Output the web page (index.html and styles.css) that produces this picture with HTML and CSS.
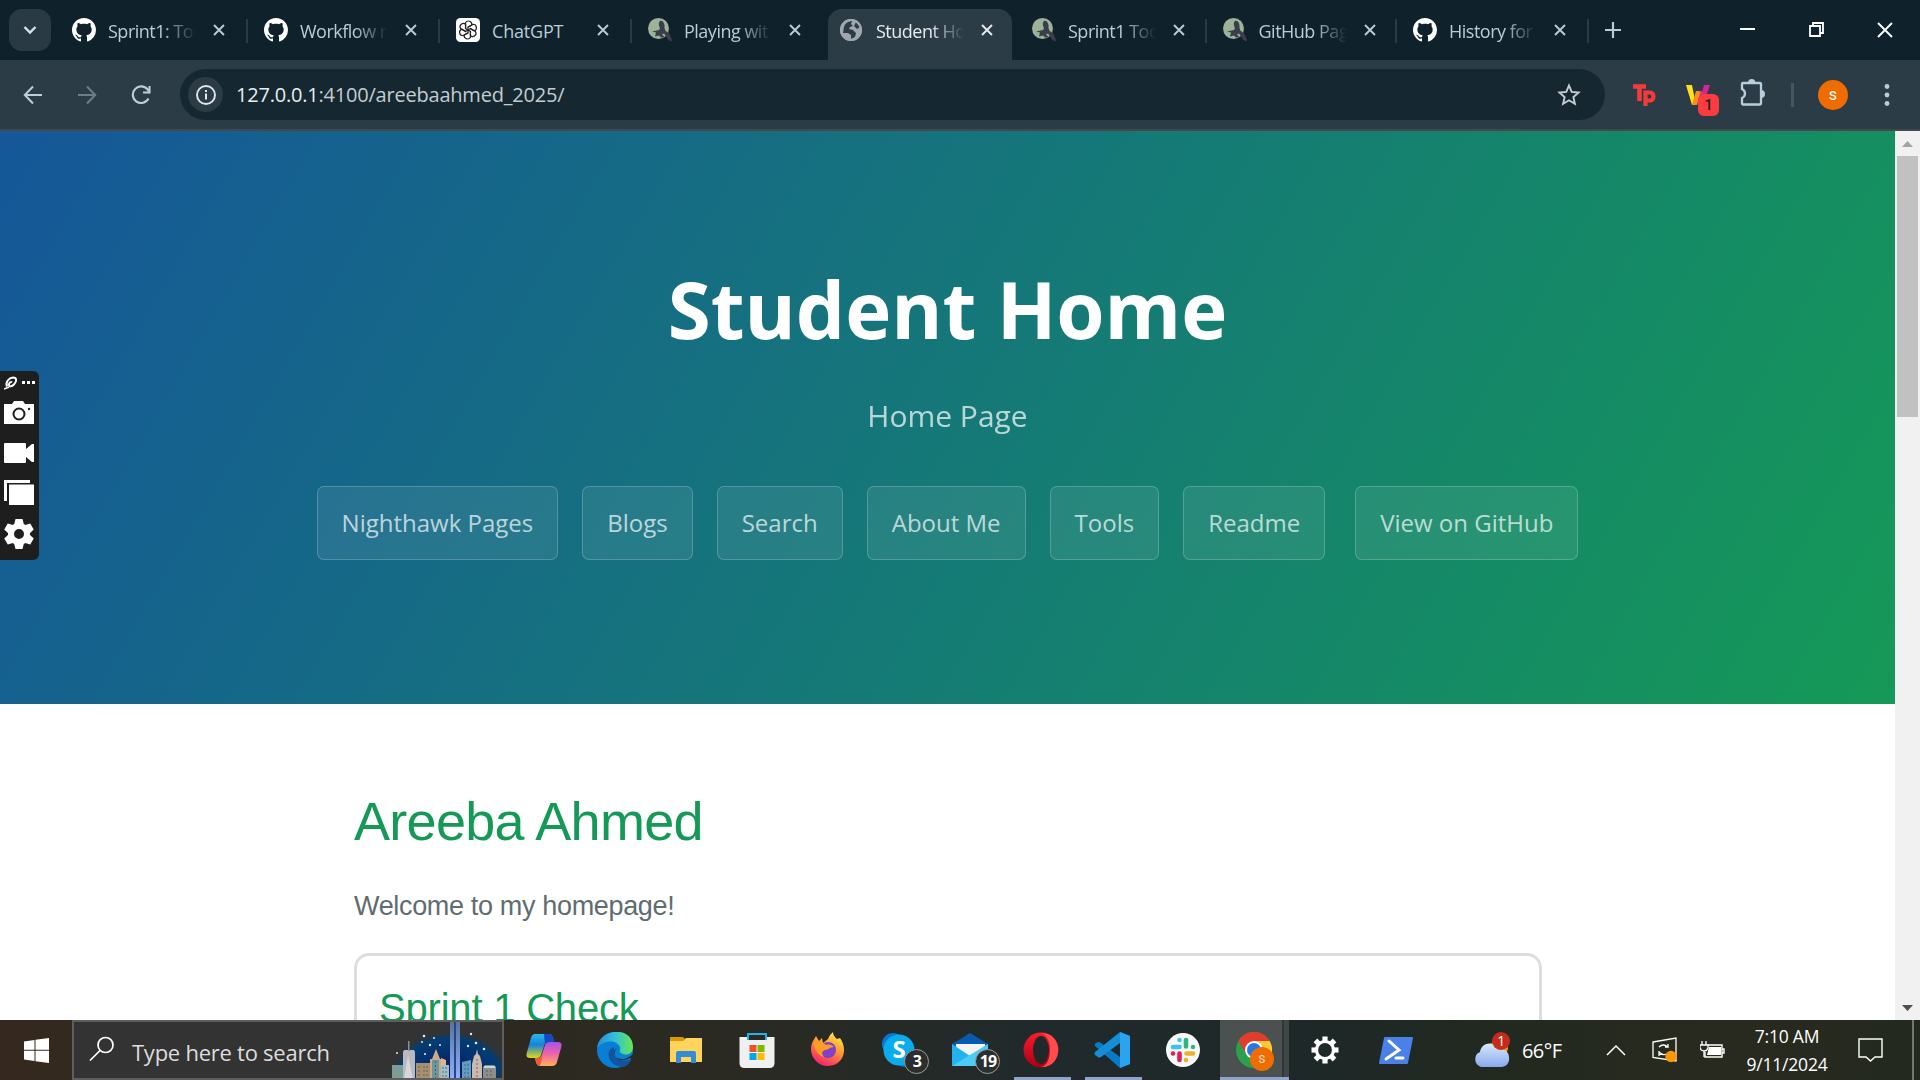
FILE: index.html
```html
<!DOCTYPE html>
<html lang="en">
<head>
<meta charset="utf-8">
<title>Student Home</title>
<link rel="stylesheet" href="styles.css">
</head>
<body>
<svg width="0" height="0" class="defs">
  <defs>
    <symbol id="github" viewBox="0 0 16 16"><path fill="#fff" fill-rule="evenodd" d="M8 0C3.58 0 0 3.58 0 8c0 3.54 2.29 6.53 5.47 7.59.4.07.55-.17.55-.38 0-.19-.01-.82-.01-1.49-2.01.37-2.53-.49-2.69-.94-.09-.23-.48-.94-.82-1.13-.28-.15-.68-.52-.01-.53.63-.01 1.08.58 1.23.82.72 1.21 1.87.87 2.33.66.07-.52.28-.87.51-1.07-1.78-.2-3.64-.89-3.64-3.95 0-.87.31-1.59.82-2.15-.08-.2-.36-1.02.08-2.12 0 0 .67-.21 2.2.82.64-.18 1.32-.27 2-.27s1.36.09 2 .27c1.53-1.04 2.2-.82 2.2-.82.44 1.1.16 1.92.08 2.12.51.56.82 1.27.82 2.15 0 3.07-1.87 3.75-3.65 3.95.29.25.54.73.54 1.48 0 1.07-.01 1.93-.01 2.2 0 .21.15.46.55.38A8.01 8.01 0 0 0 16 8c0-4.42-3.58-8-8-8z"/></symbol>
    <symbol id="hawk" viewBox="0 0 24 24"><circle cx="10.5" cy="10.5" r="10.5" fill="#9db296"/><path fill="#3a3d4c" d="M12 3c3-1 5 3 4.500 7l1 3c3 1 5 4 6.500 9.500l-1 1-3-2-4-6-2 1 3 3h-4l-2-2-4 1 1-4-4-1 7-1.500 1-2c-1-2-2-5 0-7z"/></symbol>
    <symbol id="x" viewBox="0 0 12 12"><path d="M1 1l10 10M11 1L1 11" fill="none" stroke="currentColor" stroke-width="1.900"/></symbol>
    <symbol id="knot" viewBox="0 0 24 24"><rect width="24" height="24" rx="4.500" fill="#fff"/><g fill="none" stroke="#222" stroke-width="1.200"><path id="petal" d="M12 9.300l3.800-2.200a3.400 3.400 0 0 0-6.300-2.300v5.800l2.500 1.500"/><use href="#petal" transform="rotate(60 12 12)"/><use href="#petal" transform="rotate(120 12 12)"/><use href="#petal" transform="rotate(180 12 12)"/><use href="#petal" transform="rotate(240 12 12)"/><use href="#petal" transform="rotate(300 12 12)"/></g></symbol>
  </defs>
</svg>
<div class="screen">
  <header class="tabs">
    <div class="tab-search"><svg width="14" height="10" viewBox="0 0 14 10"><path d="M1.500 2l5.500 5.500L12.500 2" fill="none" stroke="#d8e3e8" stroke-width="2.400"/></svg></div>
    <div class="tab"><svg class="fav"><use href="#github"/></svg><span class="label">Sprint1: Too</span><svg class="close"><use href="#x"/></svg></div>
    <div class="tab"><svg class="fav"><use href="#github"/></svg><span class="label">Workflow r</span><svg class="close"><use href="#x"/></svg></div>
    <div class="tab"><svg class="fav"><use href="#knot"/></svg><span class="label">ChatGPT</span><svg class="close"><use href="#x"/></svg></div>
    <div class="tab plain"><svg class="fav"><use href="#hawk"/></svg><span class="label">Playing wit</span><svg class="close"><use href="#x"/></svg></div>
    <div class="tab active"><svg class="fav" viewBox="0 0 24 24"><circle cx="11" cy="12" r="11" fill="#9fa8af"/><path d="M4 9c1-4 5-6 8-6l-1 3 2 2-3 1-1 2 4 1 3 3-1 4-4 2v-4l-3-2H3zM16 4l4 5-3 2-3-3z" fill="#2c3c46"/><circle cx="11" cy="12" r="10" fill="none" stroke="#9fa8af" stroke-width="2"/></svg><span class="label">Student Ho</span><svg class="close"><use href="#x"/></svg></div>
    <div class="tab"><svg class="fav"><use href="#hawk"/></svg><span class="label">Sprint1 Too</span><svg class="close"><use href="#x"/></svg></div>
    <div class="tab"><svg class="fav"><use href="#hawk"/></svg><span class="label">GitHub Pag</span><svg class="close"><use href="#x"/></svg></div>
    <div class="tab"><svg class="fav"><use href="#github"/></svg><span class="label">History for</span><svg class="close"><use href="#x"/></svg></div>
    <svg class="plus" width="16" height="16" viewBox="0 0 16 16"><path d="M8 0v16M0 8h16" stroke="#b9cdd7" stroke-width="2.200"/></svg>
    <div class="window">
      <svg width="16" height="16"><path d="M0 7h15" stroke="#fff" stroke-width="2"/></svg>
      <svg width="16" height="16"><path d="M1 4h10v10H1zM4 4V1h10v10h-3" fill="none" stroke="#fff" stroke-width="1.800"/></svg>
      <svg width="16" height="16"><path d="M1 1l14 14M15 1L1 15" stroke="#fff" stroke-width="1.900"/></svg>
    </div>
  </header>
  <div class="toolbar">
    <div class="nav">
      <svg width="20" height="20" viewBox="0 0 20 20"><path d="M19 10H2M10 1.500L1.800 10l8.200 8.500" fill="none" stroke="#b9d0dc" stroke-width="2"/></svg>
      <svg width="20" height="20" viewBox="0 0 20 20"><path d="M1 10h17M10 1.500l8.200 8.500-8.200 8.500" fill="none" stroke="#6e7d86" stroke-width="2"/></svg>
      <svg width="20" height="20" viewBox="0 0 20 20"><path d="M17.500 13.500A8.300 8.300 0 1 1 17 5l1 1.500M18.500 1v6.500H12" fill="none" stroke="#b9d0dc" stroke-width="2.100"/></svg>
    </div>
    <div class="omnibox">
      <span class="info"><svg width="22" height="22" viewBox="0 0 22 22"><circle cx="11" cy="11" r="9" fill="none" stroke="#e0e6ea" stroke-width="1.900"/><path d="M11 9.500v6M11 6v2" stroke="#e0e6ea" stroke-width="2"/></svg></span>
      <span class="url">127.0.0.1<i>:4100/areebaahmed_2025/</i></span>
      <svg class="star" width="24" height="24" viewBox="0 0 24 24"><path d="M12 2.500l2.700 6.400 6.900.6-5.200 4.600 1.500 6.800L12 17.300l-5.900 3.600 1.500-6.800-5.200-4.600 6.900-.6z" fill="none" stroke="#c6ced2" stroke-width="1.900"/></svg>
    </div>
    <div class="extensions">
      <svg width="24" height="24" viewBox="0 0 24 24"><path d="M0 3.500h13M6.500 3v15" stroke="#f33b3b" stroke-width="4.600"/><path d="M12.500 23V9.500h4.500a3.500 4 0 0 1 0 8h-4" fill="none" stroke="#f33b3b" stroke-width="4.200"/></svg>
      <span class="w-ext"><svg width="26" height="24" viewBox="0 0 26 24"><path d="M0 2h6l4 20H6z" fill="#ffe01b"/><path d="M6 22l4-14h5l-4 14z" fill="#ff8a1e"/><path d="M13 8l4 10 2-9z" fill="#e94a55"/><path d="M18 2h6l-5 14h-5z" fill="#d52593"/></svg><b>1</b></span>
      <svg class="puzzle" width="26" height="28" viewBox="0 0 26 28"><path d="M3 4h17a1 1 0 0 1 1 1v19.500a1 1 0 0 1-1 1H3a1 1 0 0 1-1-1V19c4-2 4-7 0-9V5a1 1 0 0 1 1-1z" fill="none" stroke="#b6cedb" stroke-width="2.300"/><path d="M8 4a3.700 4 0 0 1 7.400 0zM21 11a4 4 0 0 1 0 8z" fill="#b6cedb"/></svg>
      <span class="rule"></span><span class="avatar">s</span>
      <svg class="dots" width="6" height="24"><circle cx="3" cy="3.500" r="2.400" fill="#b6cedb"/><circle cx="3" cy="12" r="2.400" fill="#b6cedb"/><circle cx="3" cy="20.500" r="2.400" fill="#b6cedb"/></svg>
    </div>
  </div>
  <div class="viewport">
    <div class="page">
      <section class="hero">
        <h1>Student Home</h1>
        <h2>Home Page</h2>
        <nav><a>Nighthawk Pages</a><a>Blogs</a><a>Search</a><a>About Me</a><a>Tools</a><a>Readme</a><a class="repo">View on GitHub</a></nav>
      </section>
      <main>
        <h1>Areeba Ahmed</h1>
        <p>Welcome to my homepage!</p>
        <div class="card"><h2>Sprint 1 Check</h2></div>
      </main>
    </div>
    <div class="scroll"><svg width="25" height="25"><path d="M7 16l5.500-6 5.500 6z" fill="#a3a3a3"/></svg><span></span><svg width="25" height="25"><path d="M7 10l5.500 6 5.500-6z" fill="#505050"/></svg></div>
    <aside class="capture">
      <svg width="31" height="14" viewBox="0 0 31 14"><g fill="none" stroke="#fff"><path d="M3 10.500C1 6 5 2 9 1.500c4 0 4 4 1 7-2 2-5 3-5 0 0-2 2-3 3-2" stroke-width="2"/><path d="M0 13l5-2" stroke-width="1.500"/></g><path d="M18 5h3v3h-3zM23 5h3v3h-3zM28 5h3v3h-3z" fill="#fff"/></svg>
      <svg width="30" height="23" viewBox="0 0 30 23"><path d="M0 3h8l2-3h9l2 3h9v20H0z" fill="#fff"/><circle cx="15" cy="13" r="5.500" fill="#fff" stroke="#1e1e1e" stroke-width="2"/><circle cx="25" cy="8" r="1.200" fill="#222"/></svg>
      <svg width="30" height="20" viewBox="0 0 30 20"><path d="M1 0h20q1 0 1 1v5l6-5h2v18h-2l-6-5v5q0 1-1 1H1q-1 0-1-1V1q0-1 1-1z" fill="#fff"/></svg>
      <svg width="30" height="25" viewBox="0 0 30 25"><path d="M0 0h26v3H3v18H0zM5 4.500h25V25H5z" fill="#fff"/></svg>
      <svg width="30" height="30" viewBox="-15 -15 30 30"><g fill="#fff"><path id="tooth" d="M-3.500-15h7l1.500 6h-10z"/><use href="#tooth" transform="rotate(60)"/><use href="#tooth" transform="rotate(120)"/><use href="#tooth" transform="rotate(180)"/><use href="#tooth" transform="rotate(240)"/><use href="#tooth" transform="rotate(300)"/></g><circle r="8" fill="none" stroke="#fff" stroke-width="6"/></svg>
    </aside>
  </div>
  <footer class="taskbar">
    <div class="start"><svg width="25" height="25" viewBox="0 0 25 25"><path d="M0 3.500l10.500-1.500v9.700H0zM11.500 1.800L25 0v11.700H11.500zM0 12.800h10.500V23L0 21.500zM11.500 12.800H25V25l-13.500-1.800z" fill="#fff"/></svg></div>
    <div class="search">
      <svg width="26" height="26" viewBox="0 0 26 26"><circle cx="16.500" cy="9" r="7.500" fill="none" stroke="#fff" stroke-width="1.700"/><path d="M11 14.500L1 24.500" stroke="#fff" stroke-width="1.700"/></svg>
      <span>Type here to search</span>
      <svg class="city" width="112" height="58" viewBox="0 0 112 58">
        <defs><radialGradient id="night" cx=".5" cy=".7" r=".55"><stop offset="0" stop-color="#1a1157"/><stop offset=".5" stop-color="#052f70"/><stop offset=".85" stop-color="#033d73"/><stop offset="1" stop-color="#333" stop-opacity="0"/></radialGradient><linearGradient id="beam" x2="0" y2="1"><stop stop-color="#54749d"/><stop offset="1" stop-color="#8fb0ff"/></linearGradient></defs>
        <ellipse cx="60" cy="38" rx="54" ry="40" fill="url(#night)"/>
        <path d="M2 44h11v14H2z" fill="#7c9c96"/><path d="M26 42h14v16H26z" fill="#a69070"/><path d="M13 31l1-2h10l1 2v27H13z" fill="#b9b9c0"/><path d="M18 20h1.500v10H18z" fill="#8e8e98"/><path d="M14 58l4-24 5 24z" fill="#d9d6da"/>
        <path d="M40 38h2l4-10 4 10h1v20H40z" fill="#c9ab8b"/><path d="M42 39h7v19h-7z" fill="#6a979b"/><path d="M51 37l5 2v5h-5z" fill="#e0b48c"/><path d="M51 44h8v14h-8z" fill="#9dbfc9"/>
        <path d="M72 41l9-2v19h-9z" fill="#5f9ec0"/><path d="M82 43l2-8 2-2 1-5 1 5 2 2 2 8v15H82z" fill="#cbb9ae"/><path d="M93 46l2-2h9l2 2v12H93z" fill="#8f8d8c"/><path d="M94 45h11v2H94z" fill="#b6dbe3"/>
        <path d="M60 0h4v58h-4zM66 0h4v58h-4z" fill="url(#beam)"/><path d="M64 0h2v58h-2z" fill="#2a4583"/>
        <path d="M29 45v12M34 45v12M37 45v12M45.500 40v17M53 46v11M56 46v11M75 43v14M78 43v14M87 38v19M97 49v8M101 49v8" stroke="#4f4550" stroke-dasharray="2 2" stroke-opacity=".7"/>
        <g fill="#d8edf4"><circle cx="34" cy="15" r="1.300"/><circle cx="44" cy="17" r="1"/><circle cx="32" cy="21" r="1"/><circle cx="40" cy="24" r="1.200"/><circle cx="50" cy="24" r="1"/><circle cx="35" cy="33" r="1.100"/><circle cx="7" cy="32" r="1"/><circle cx="81" cy="13" r="1.200"/><circle cx="86" cy="22" r="1.300"/><circle cx="94" cy="28" r="1.300"/><circle cx="78" cy="25" r="1.200"/></g>
      </svg>
    </div>
    <div class="apps">
      <div class="app"><svg viewBox="0 0 36 36"><defs><linearGradient id="ca" x2="0" y2="1"><stop stop-color="#28b8ef"/><stop offset=".45" stop-color="#1683d8"/><stop offset="1" stop-color="#e2d817"/></linearGradient><linearGradient id="cb" x2="0" y2="1"><stop stop-color="#a651ed"/><stop offset=".5" stop-color="#ee64a7"/><stop offset="1" stop-color="#ffb157"/></linearGradient></defs><path d="M9 2h14q3 0 4 4l1 4h-5q-4 0-5 4l-3 9q-1 3-4 3H4q-5 0-3-6L5 6q1-4 4-4z" fill="url(#ca)"/><path d="M18 2h5q3 0 4 4l1 4h-5q-3 0-4 3z" fill="#1747c4"/><path d="M9 26h3q3 0 4-4l3-9q1-3 5-3h8q5 0 3 6l-4 14q-1 4-5 4H14q-3 0-4-4z" fill="url(#cb)"/><path d="M9 26h4q3 0 4-3l-3 11q-3 0-4-4z" fill="#ed5a38"/></svg></div>
      <div class="app"><svg viewBox="0 0 36 36"><defs><linearGradient id="ea" x2="1"><stop stop-color="#278bd7"/><stop offset=".5" stop-color="#31c1d8"/><stop offset="1" stop-color="#68e850"/></linearGradient></defs><circle cx="18" cy="18" r="18" fill="#087fd4"/><path d="M0 16C3-5 36-6 36 15c0 8-8 9-12 6-3-2 0-2-1-6C20 8 8 7 0 16z" fill="url(#ea)"/><path d="M17 15c-11 4-4 21 10 20 3-1 7-5 7-8-7 4-16 1-17-5z" fill="#12549f"/><path d="M20 16c-4 2-4 7 0 10 4 2 9 2 16-4v5l-3-1c-11 7-20-3-13-10z" fill="#292b28"/></svg></div>
      <div class="app"><svg viewBox="0 0 36 36"><path d="M2 5h13l3 3v5H2z" fill="#dc9800"/><path d="M2 9h13l3-3h16v24H2z" fill="#ffd45d"/><path d="M8 31V21q0-2 2-2h16q2 0 2 2v10h-5v-6H13v6z" fill="#348cd9"/></svg></div>
      <div class="app"><svg viewBox="0 0 36 36"><path d="M9 8V2h18v6" fill="none" stroke="#23b3ec" stroke-width="2"/><path d="M.5 5H8v3h20V5h7.500v26q0 5-5 5h-25q-5 0-5-5z" fill="#f0f0f0"/><path d="M10.500 13h7v7h-7z" fill="#f25022"/><path d="M18.500 13h7v7h-7z" fill="#7fba00"/><path d="M10.500 21h7v7h-7z" fill="#00a4ef"/><path d="M18.500 21h7v7h-7z" fill="#ffb900"/></svg></div>
      <div class="app"><svg viewBox="0 0 36 36"><defs><linearGradient id="fa" x1=".8" x2=".3" y2="1"><stop stop-color="#fff04b"/><stop offset=".45" stop-color="#ff9830"/><stop offset="1" stop-color="#f51c70"/></linearGradient></defs><path d="M18 7q1-4 5-7 0 4 4 7l3-1c9 13 2 28-12 28C5 34-3 20 3 9l3-5 3 5 3-3 1 5z" fill="url(#fa)"/><circle cx="18" cy="18" r="8" fill="#7e42c9"/><path d="M4 9c6 0 9 1 12 4 3-1 6 0 8 2-5 0-5 3-9 3-3 1-4 3-1 7-7-2-10-8-10-16z" fill="#ff9c27"/></svg></div>
      <div class="app"><svg viewBox="0 0 36 36"><circle cx="12" cy="12" r="11" fill="#0878cf"/><circle cx="24" cy="24" r="11" fill="#0878cf"/><circle cx="18" cy="18" r="15.500" fill="#0bacec"/><text x="18" y="26" text-anchor="middle" class="skype">S</text></svg><b class="count">3</b></div>
      <div class="app"><svg viewBox="0 0 36 36"><path d="M0 12L18 1l18 11v12H0z" fill="#075baf"/><path d="M4 12h29v14H4z" fill="#f3f3f3"/><path d="M0 12l18 12 18-12v22H0z" fill="#23b2ee"/><path d="M0 34L36 12v22z" fill="#4ccbf6"/></svg><b class="count">19</b></div>
      <div class="app run"><svg viewBox="0 0 36 36"><defs><linearGradient id="oa" x2="0" y2="1"><stop stop-color="#ff1b2d"/><stop offset="1" stop-color="#a70014"/></linearGradient></defs><circle cx="18" cy="18" r="17.500" fill="url(#oa)"/><path d="M18 1c23-1 23 35 0 34 12-2 12-32 0-34z" fill="#ff4b4b"/><ellipse cx="18" cy="18" rx="8" ry="14" fill="#202828"/></svg></div>
      <div class="app run"><svg viewBox="0 0 36 36"><path d="M26 0l10 4v28l-10 4L1 14q-1-2 1-3l2-1q2 0 3 1l19 14z" fill="#087ac6"/><path d="M26 11L7 25q-2 1-3 0l-3-2q-1-1 0-3L26 0z" fill="#158dd7"/><path d="M26 0l10 4v28l-10 4z" fill="#28a4f2"/></svg></div>
      <div class="app"><svg viewBox="0 0 36 36"><circle cx="18" cy="18" r="17" fill="#fafafa"/><g fill="none" stroke-width="4.600" stroke-linecap="round"><path d="M14.500 8v0M8 15h6.500" stroke="#36c5f0"/><path d="M21 8v6.500M28 15v0" stroke="#2eb67d"/><path d="M21.500 21.500H28M21 28v0" stroke="#ecb22e"/><path d="M14.500 21.500V28M8 21.500v0" stroke="#e01e5a"/></g></svg></div>
      <div class="app run focus"><svg viewBox="0 0 36 36"><circle cx="18" cy="18" r="18" fill="#2aa14b"/><path d="M2.400 9A18 18 0 0 1 33.600 9H18l-8 13z" fill="#e33b2e"/><path d="M18 9h15.600A18 18 0 0 1 18 36l8-14z" fill="#fcc934"/><circle cx="18" cy="18" r="9" fill="#fff"/><circle cx="18" cy="18" r="7" fill="#2479e8"/></svg><b class="profile">s</b></div>
      <div class="app"><svg viewBox="-18 -18 36 36"><g fill="#fff"><path id="cog" d="M-2.600-13.500h5.200v5h-5.200z"/><use href="#cog" transform="rotate(45)"/><use href="#cog" transform="rotate(90)"/><use href="#cog" transform="rotate(135)"/><use href="#cog" transform="rotate(180)"/><use href="#cog" transform="rotate(225)"/><use href="#cog" transform="rotate(270)"/><use href="#cog" transform="rotate(315)"/></g><circle r="8.500" fill="none" stroke="#fff" stroke-width="3.200"/></svg></div>
      <div class="app"><svg viewBox="0 0 36 36"><path d="M7 5h27q1 0 1 1l-5 25q0 1-1 1H2q-1 0-1-1L6 6q0-1 1-1z" fill="#4b80e6"/><path d="M11 9l10 9-13 9M18 26h7" fill="none" stroke="#fff" stroke-width="3" stroke-linecap="round"/></svg></div>
    </div>
    <div class="tray">
      <div class="weather"><svg width="38" height="38" viewBox="0 0 38 38"><defs><linearGradient id="cloud" x2="0" y2="1"><stop stop-color="#d9e8ff"/><stop offset="1" stop-color="#87a9ec"/></linearGradient></defs><circle cx="26" cy="17" r="9" fill="#f39b16"/><path d="M8 36a8 8 0 0 1-1-15c1-10 15-12 18-2 5-3 11 2 11 7 1 6-3 10-8 10z" fill="url(#cloud)"/><circle cx="28" cy="10" r="9" fill="#c42b1c"/><text x="28" y="15" text-anchor="middle" class="alert">1</text></svg><span>66°F</span></div>
      <svg width="20" height="12" viewBox="0 0 20 12"><path d="M1 11l9-9 9 9" fill="none" stroke="#fff" stroke-width="1.500"/></svg>
      <svg class="update" width="26" height="26" viewBox="0 0 26 26"><path d="M1 5l23-4v23L1 20.500z" fill="none" stroke="#fff" stroke-width="1.300"/><path d="M7 10q4-4 9 0V7M16 10h-3M7 14v4l3-1M7 15q4 4 7 2" fill="none" stroke="#fff" stroke-width="1.300"/><circle cx="19" cy="19.500" r="5.700" fill="#ff9800"/></svg>
      <svg class="battery" width="25" height="18" viewBox="0 0 25 18"><path d="M8 4h14v12H5V11M22 8h2v4h-2" fill="none" stroke="#fff" stroke-width="1.400"/><path d="M9 6h12v8H7z" fill="#fff"/><path d="M2 0v4M6 0v4M0 4h8v3q-1 3-4 3t-4-3zM4 10v6" stroke="#fff" fill="#262a22" stroke-width="1.300"/></svg>
      <div class="clock"><span>7:10 AM</span><span>9/11/2024</span></div>
      <svg class="note" width="26" height="25" viewBox="0 0 26 25"><path d="M1 1h23v18h-7l-4.500 4L8 19H1z" fill="none" stroke="#fff" stroke-width="1.400"/></svg>
      <i></i>
    </div>
  </footer>
</div>
</body>
</html>
```
FILE: styles.css
```css
* { box-sizing: border-box; }
body { margin: 0; overflow: hidden; font-family: "Open Sans", "Noto Sans", sans-serif; }
.defs { display: block; }
svg { flex: none; display: block; }
.screen { width: 1920px; height: 1080px; display: flex; flex-direction: column; overflow: hidden; background: #fff; }
.tabs { height: 60px; flex: none; background: #0f222c; display: flex; align-items: center; padding-left: 9px; }
.tab-search { width: 42px; height: 42px; border-radius: 13px; background: #2a3a44; display: grid; place-items: center; margin-right: 5px; }
.tab { width: 192px; height: 51px; margin-top: 9px; display: flex; align-items: center; padding: 0 0 9px 16px; color: #b9cdd7; position: relative; }
.tab:nth-child(7), .tab:nth-child(8) { width: 190.500px; }
.tab::after { content: ""; position: absolute; right: 0; top: 10px; width: 2px; height: 24px; background: #2b3b46; }
.plain::after, .tab.active::after { display: none; }
.fav { width: 24px; height: 24px; margin-right: 12px; }
.label { width: 88px; overflow: hidden; white-space: nowrap; font-size: 18px; letter-spacing: -.5px; line-height: 26px; padding-top: 2px; mask-image: linear-gradient(90deg, #000 62%, transparent 100%); }
.tab:nth-child(4) .label { mask-image: none; letter-spacing: -.2px; }
.close { width: 12px; height: 12px; margin-left: 17px; }
.active { color: #e6ebee; }
.active::before { content: ""; position: absolute; inset: 0 4px; border-radius: 14px 14px 0 0; background: #2c3c46; }
.active > * { position: relative; }
.plus { margin-left: 16px; }
.window { margin-left: auto; padding-right: 27px; display: flex; gap: 52.500px; }
.toolbar { height: 71px; flex: none; background: #2c3c46; border-bottom: 2px solid #43484b; display: flex; align-items: center; }
.nav { width: 180px; display: flex; gap: 34px; padding-left: 23px; }
.omnibox { width: 1425px; height: 51px; border-radius: 26px; background: #152831; display: flex; align-items: center; padding: 0 24px 0 8px; }
.info { width: 35px; height: 35px; border-radius: 50%; background: #2c3c46; display: grid; place-items: center; }
.url { margin-left: 13px; font-size: 20px; letter-spacing: -.21px; color: #e8edf0; line-height: 28px; }
.url i { font-style: normal; color: #c4ccd0; }
.star { margin-left: auto; }
.extensions { flex: 1; display: flex; align-items: center; padding-left: 28px; }
.w-ext { position: relative; margin-left: 29px; }
.w-ext b { position: absolute; left: 12px; top: 11px; width: 21px; height: 22px; border-radius: 6px; background: #fa3b3f; color: #222; font: 500 15px/22px Roboto, sans-serif; text-align: center; }
.puzzle { margin: -4px 0 0 28px; }
.rule { width: 3px; height: 24px; background: #46555f; margin-left: 25px; }
.avatar { width: 30px; height: 30px; border-radius: 50%; background: #ef6c00; color: #fff; font: 16px/29px Roboto, sans-serif; text-align: center; margin-left: 24px; }
.dots { margin-left: 36px; }
.viewport { height: 889px; flex: none; display: flex; position: relative; overflow: hidden; }
.page { width: 1895px; overflow: hidden; }
.hero { height: 573px; padding: 120px 144px; color: #fff; text-align: center; background: linear-gradient(120deg, #155799, #159957); }
.hero h1 { margin: 0 0 2px; font-size: 78px; line-height: 117px; }
.hero h2 { margin: 0 0 48px; font-size: 30px; line-height: 45px; font-weight: 400; opacity: .7; padding-top: 23px; }
.hero nav { display: flex; justify-content: center; gap: 24px; }
.hero a { border: 1px solid rgba(255,255,255,.2); border-radius: 7px; background: rgba(255,255,255,.08); color: rgba(255,255,255,.7); padding: 18px 24px; font-size: 24px; line-height: 36px; white-space: nowrap; }
.hero .repo { margin-left: 6px; }
main { padding: 77px 353px 0 354px; font-family: "Liberation Sans", Arial, sans-serif; color: #606c71; }
main h1 { margin: 0; font-size: 54px; letter-spacing: -.7px; line-height: 81px; font-weight: 400; color: #159957; }
main p { margin: 24px 0 27px; font-size: 27px; letter-spacing: -.34px; line-height: 40px; }
.card { height: 400px; border: 3px solid #ddd; border-radius: 15px; padding: 22px; }
.card h2 { margin: 0; font-size: 40px; letter-spacing: -.2px; line-height: 60px; font-weight: 400; color: #159957; }
.scroll { width: 25px; background: #f1f1f1; display: flex; flex-direction: column; align-items: center; }
.scroll span { width: 21px; height: 261px; background: #c1c1c1; margin-bottom: auto; }
.capture { position: absolute; left: 0; top: 240px; width: 39px; height: 189px; border-radius: 0 6px 6px 0; background: #1e1e1e; display: flex; flex-direction: column; align-items: flex-start; padding: 5px 0 0 4px; }
.capture svg + svg { margin-top: 19px; }
.capture svg:nth-child(2) { margin-top: 11px; }
.capture svg:nth-child(4) { margin-top: 17px; }
.capture svg:nth-child(5) { margin-top: 14px; }
.taskbar { height: 60px; flex: none; display: flex; color: #fff; background: linear-gradient(90deg, #35291f 0%, #30291f 20%, #292a23 40%, #202a2c 55%, #1e2828 68%, #22291f 78%, #292a1f 90%, #23291f 100%); }
.start { width: 72px; display: grid; place-items: center; }
.search { width: 432px; height: 60px; background: #333; border: 2px solid #5e5e5e; display: flex; align-items: center; padding-left: 15px; overflow: hidden; }
.search svg:first-child { margin-bottom: 2px; }
.search span { font-size: 22px; letter-spacing: -.25px; margin: 3px 0 0 17px; white-space: nowrap; color: #ddd; }
.city { margin-left: auto; }
.apps { width: 923px; flex: none; display: flex; padding-left: 4px; }
.app { width: 71.080px; flex: none; position: relative; display: grid; place-items: center; }
.app > svg { width: 36px; height: 36px; }
.run::after { content: ""; position: absolute; bottom: 0; left: 8px; width: 57px; height: 3px; background: #8fa4cd; }
.focus::before { content: ""; position: absolute; top: 0; bottom: 0; left: 1px; width: 69px; background: linear-gradient(90deg, #4b5150 0 62px, #303535 62px 64px, #414747 64px); }
.run.focus::after { left: 1px; width: 69px; }
.focus > * { position: relative; }
.skype { font: bold 24px "Open Sans", sans-serif; fill: #fff; }
.count { position: absolute; left: 41px; top: 29px; width: 25px; height: 25px; border: 1px solid #999; border-radius: 50%; background: #2b2e2d; font-size: 16px; line-height: 23px; text-align: center; letter-spacing: -1px; }
.app .profile { position: absolute; left: 31px; top: 27px; width: 24px; height: 24px; border-radius: 50%; background: #ef6c00; color: #ffd9b8; font: 14px/23px Roboto, sans-serif; text-align: center; }
.tray { flex: 1; display: flex; align-items: center; position: relative; }
.weather { width: 179px; padding-left: 46px; display: flex; align-items: center; gap: 11px; font-size: 20px; letter-spacing: -.6px; white-space: nowrap; }
.alert { font: 14px "Open Sans", sans-serif; fill: #fff; }
.update { margin-left: 26px; }
.battery { margin-left: 22px; }
.clock { width: 116px; margin-left: 4px; display: flex; flex-direction: column; align-items: center; font-size: 17.500px; line-height: 28px; letter-spacing: -.2px; white-space: nowrap; }
.note { margin-left: 13px; }
.tray i { position: absolute; right: 6px; top: 0; width: 2px; height: 60px; background: #74776f; }
```
